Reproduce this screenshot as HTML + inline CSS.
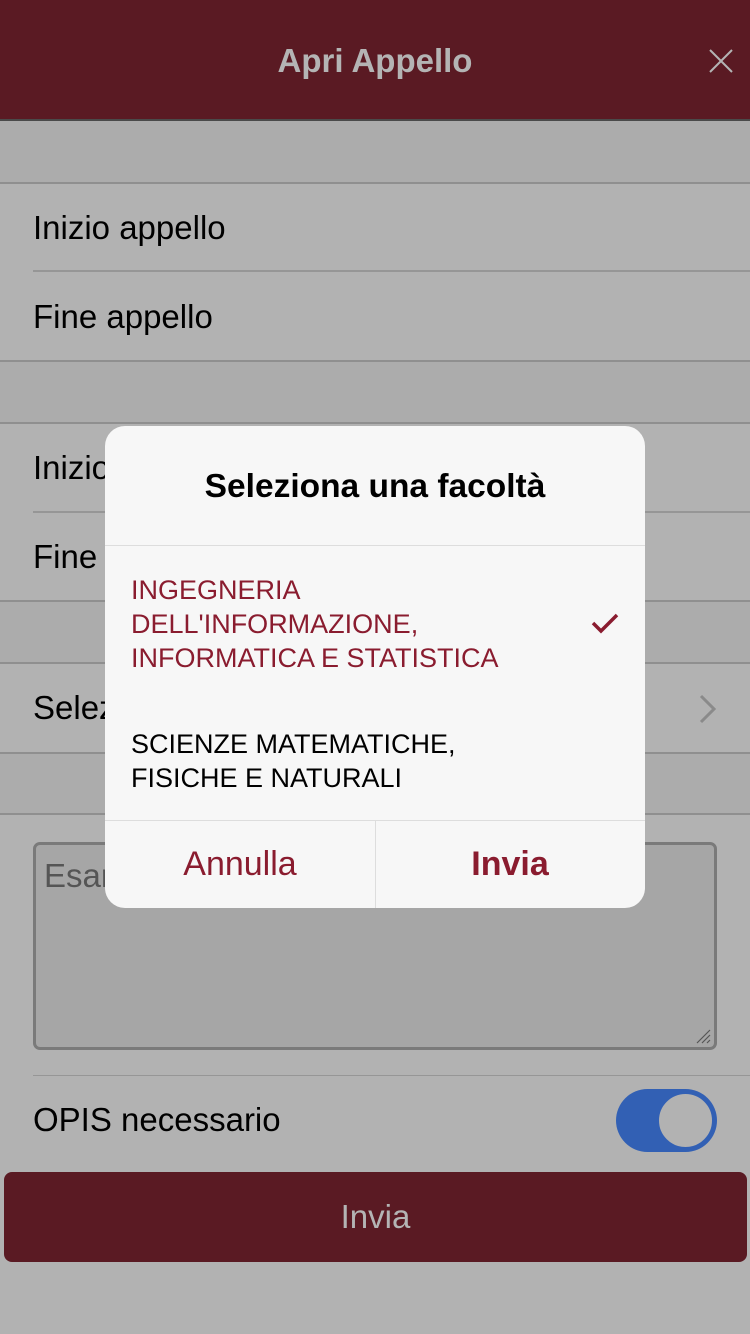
<!DOCTYPE html>
<html><head><meta charset="utf-8"><style>
*{margin:0;padding:0;box-sizing:border-box}
body{width:750px;height:1334px;background:#b2b2b2;font-family:"Liberation Sans",sans-serif;position:relative;overflow:hidden}
.hdr{position:absolute;left:0;top:0;width:750px;height:121px;background:#5a1a23;border-bottom:2px solid #4a4a4a}
.hdr .t{position:absolute;left:0;right:0;top:42px;text-align:center;color:#b4b4b4;font-size:33px;font-weight:bold}
.sec{position:absolute;left:0;width:750px;background:#acacac;border-top:2px solid #8f8f8f;border-bottom:2px solid #8f8f8f}
.row{position:absolute;left:33px;font-size:33px;color:#000}
.ln{position:absolute;left:33px;right:0;height:2px;background:#969696}
.ta{position:absolute;left:33px;top:842px;width:684px;height:208px;background:#a6a6a6;border:3px solid #7a7a7a;border-radius:7px}
.ta span{position:absolute;left:8px;top:12px;font-size:33px;color:#555}
.tog{position:absolute;left:616px;top:1089px;width:101px;height:63px;border-radius:32px;background:#3260b4}
.tog i{position:absolute;right:3px;top:3px;width:57px;height:57px;border-radius:50%;background:#b2b2b2;border:2px solid #3260b4}
.btn{position:absolute;left:4px;top:1172px;width:743px;height:90px;background:#5a1a23;border-radius:8px;color:#b4b4b4;font-size:33px;text-align:center;line-height:90px}
.dlg{position:absolute;left:105px;top:426px;width:540px;height:482px;background:#f7f7f7;border-radius:20px;overflow:hidden}
.dlg .h{position:absolute;top:42px;left:0;right:0;text-align:center;font-size:33.5px;font-weight:bold;color:#000}
.sep{position:absolute;left:0;right:0;height:1px;background:#ddd}
.opt{position:absolute;left:26px;font-size:27px;line-height:34px}
.b{position:absolute;top:419px;width:270px;text-align:center;font-size:34px;color:#8a1c2f}
</style></head><body>
<div class="hdr"><div class="t">Apri Appello</div>
<svg style="position:absolute;left:709px;top:49px" width="24" height="24"><path d="M1 1L23 23M23 1L1 23" stroke="#b4b4b4" stroke-width="2"/></svg></div>
<div class="sec" style="top:121px;height:63px;border-top:none"></div>
<div class="row" style="top:209px">Inizio appello</div>
<div class="ln" style="top:270px"></div>
<div class="row" style="top:298px">Fine appello</div>
<div class="sec" style="top:360px;height:64px"></div>
<div class="row" style="top:449px">Inizio</div>
<div class="ln" style="top:511px"></div>
<div class="row" style="top:538px">Fine</div>
<div class="sec" style="top:600px;height:64px"></div>
<div class="row" style="top:689px">Selez</div>
<svg style="position:absolute;left:698px;top:694px" width="20" height="30"><path d="M3 2L16 15L3 28" stroke="#8a8a8a" stroke-width="3" fill="none"/></svg>
<div class="sec" style="top:752px;height:63px"></div>
<div class="ta"><span>Esar</span>
<svg style="position:absolute;right:3px;bottom:3px" width="16" height="16"><path d="M15 2L2 15M15 7L7 15M15 12L12 15" stroke="#555" stroke-width="1.2"/></svg></div>
<div class="ln" style="top:1075px;height:1px"></div>
<div class="row" style="top:1101px">OPIS necessario</div>
<div class="tog"><i></i></div>
<div class="btn">Invia</div>
<div class="dlg">
<div class="h">Seleziona una facoltà</div>
<div class="sep" style="top:119px"></div>
<div class="opt" style="top:147px;color:#8a1c2f">INGEGNERIA<br>DELL'INFORMAZIONE,<br>INFORMATICA E STATISTICA</div>
<svg style="position:absolute;left:486px;top:186px" width="28" height="22"><path d="M2 11L10 19L26 3" stroke="#8a1c2f" stroke-width="3.5" fill="none"/></svg>
<div class="opt" style="top:301px;color:#000">SCIENZE MATEMATICHE,<br>FISICHE E NATURALI</div>
<div class="sep" style="top:394px"></div>
<div class="sep" style="top:394px;left:270px;width:1px;height:90px"></div>
<div class="b" style="left:0">Annulla</div>
<div class="b" style="left:270px;font-weight:bold">Invia</div>
</div>
</body></html>
